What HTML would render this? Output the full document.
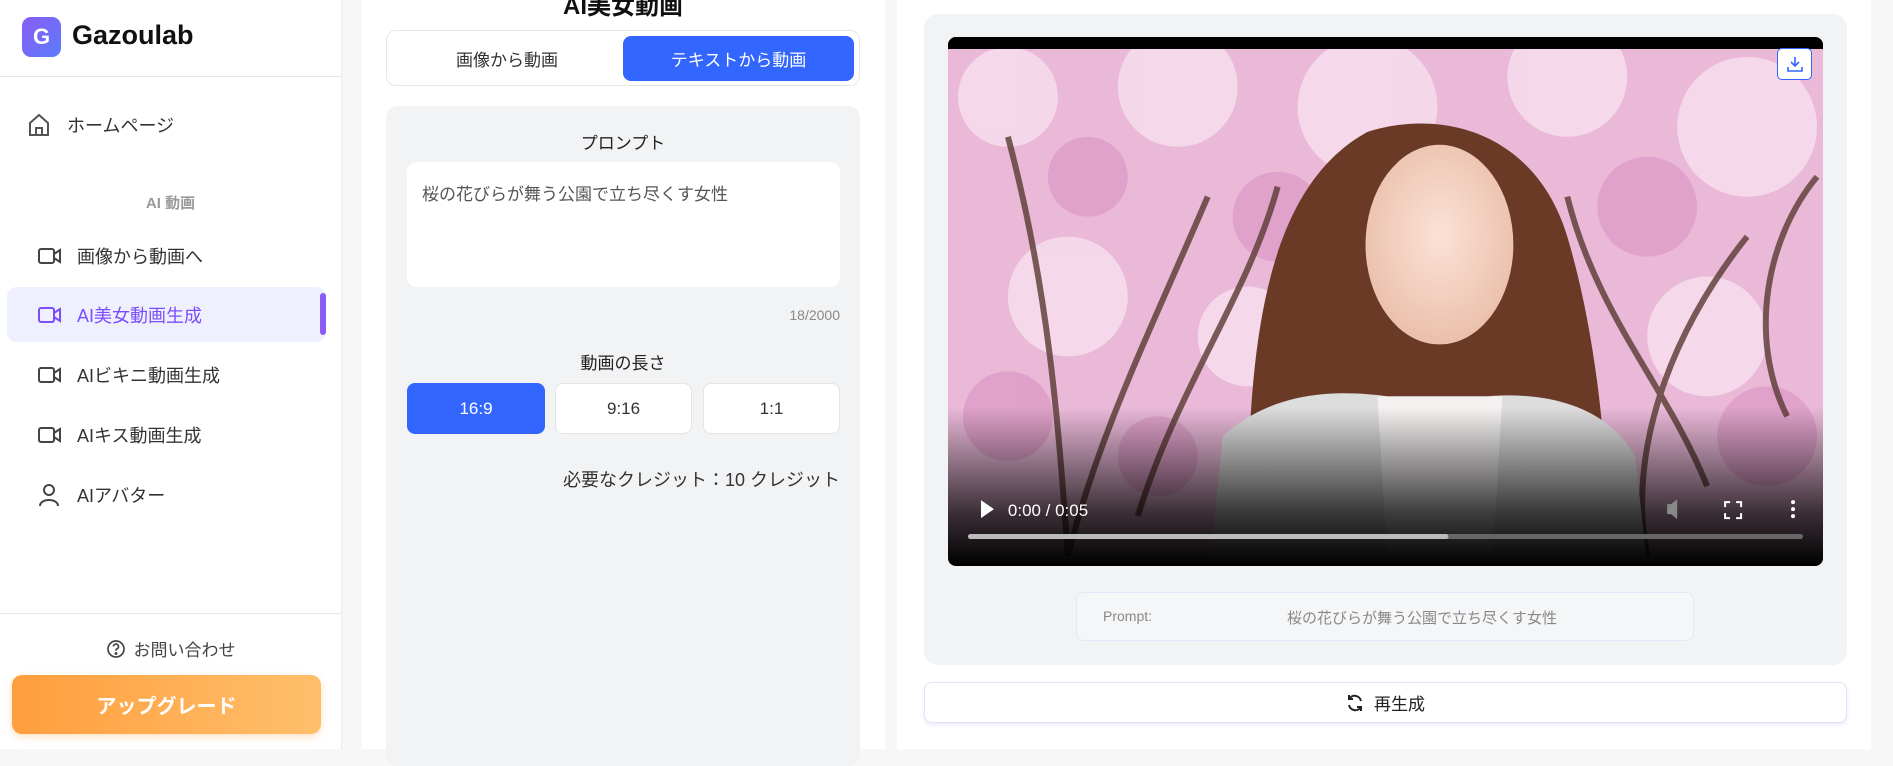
<!DOCTYPE html>
<html><head><meta charset="utf-8"><style>
*{box-sizing:border-box;margin:0;padding:0}
body{width:1893px;height:749px;overflow:hidden;background:#f7f7f8;font-family:"Liberation Sans","Noto Sans CJK JP",sans-serif;color:#333;position:relative}
.abs{position:absolute}
.side{left:0;top:0;width:342px;height:749px;background:#fff;border-right:1px solid #ececec}
.item{position:absolute;left:7px;width:319px;height:55px;display:flex;align-items:center;font-size:18px;color:#333}
.item svg{position:absolute;left:31px}
.item span{position:absolute;left:70px}
.c{display:flex;align-items:center;justify-content:center}
</style></head><body>
<div class="abs side">
  <div class="abs c" style="left:22px;top:17px;width:39px;height:40px;border-radius:9px;background:linear-gradient(135deg,#8a5cf6,#5b7cfa);color:#fff;font-weight:bold;font-size:22px">G</div>
  <div class="abs" style="left:72px;top:20px;font-size:27px;font-weight:bold;color:#111">Gazoulab</div>
  <div class="abs" style="left:0;top:76px;width:341px;height:1px;background:#e8e8e8"></div>
  <div class="item" style="top:97px"><svg style="left:21px" width="22" height="24" viewBox="0 0 22 24" fill="none" stroke="#555" stroke-width="2"><path d="M2 10 L11 2 L20 10 V22 H2 Z"/><path d="M8 22 V15 H14 V22"/></svg><span style="left:60px">ホームページ</span></div>
  <div class="abs" style="left:0;width:341px;top:192px;text-align:center;font-size:15px;color:#999;font-weight:bold">AI 動画</div>
  <div class="item" style="top:228px"><svg width="24" height="18" viewBox="0 0 24 18" fill="none" stroke="#444" stroke-width="2"><rect x="1" y="2" width="15" height="14" rx="2"/><path d="M16 7 L22 3 V15 L16 11"/></svg><span>画像から動画へ</span></div>
  <div class="item" style="top:287px;background:#eef0fe;border-radius:10px"><svg width="24" height="18" viewBox="0 0 24 18" fill="none" stroke="#7c4dff" stroke-width="2"><rect x="1" y="2" width="15" height="14" rx="2"/><path d="M16 7 L22 3 V15 L16 11"/></svg><span style="color:#7c4dff">AI美女動画生成</span><div class="abs" style="left:313px;top:6px;width:6px;height:42px;background:#8b5cf6;border-radius:3px"></div></div>
  <div class="item" style="top:347px"><svg width="24" height="18" viewBox="0 0 24 18" fill="none" stroke="#444" stroke-width="2"><rect x="1" y="2" width="15" height="14" rx="2"/><path d="M16 7 L22 3 V15 L16 11"/></svg><span>AIビキニ動画生成</span></div>
  <div class="item" style="top:407px"><svg width="24" height="18" viewBox="0 0 24 18" fill="none" stroke="#444" stroke-width="2"><rect x="1" y="2" width="15" height="14" rx="2"/><path d="M16 7 L22 3 V15 L16 11"/></svg><span>AIキス動画生成</span></div>
  <div class="item" style="top:467px"><svg width="22" height="24" viewBox="0 0 22 24" fill="none" stroke="#444" stroke-width="2"><circle cx="11" cy="7" r="5"/><path d="M2 23 C2 15 20 15 20 23"/></svg><span>AIアバター</span></div>
  <div class="abs" style="left:0;top:613px;width:341px;height:1px;background:#e8e8e8"></div>
  <div class="abs c" style="left:0;width:341px;top:636px;font-size:17px;color:#444;gap:8px"><svg width="20" height="20" viewBox="0 0 20 20" fill="none" stroke="#444" stroke-width="1.7"><circle cx="10" cy="10" r="8"/><path d="M7.5 7.5 a2.5 2.5 0 1 1 3.5 2.3 c-1 .5-1 1-1 2"/><circle cx="10" cy="14.5" r=".6" fill="#444"/></svg>お問い合わせ</div>
  <div class="abs c" style="left:12px;top:675px;width:309px;height:59px;border-radius:10px;background:linear-gradient(90deg,#ff9e3d,#ffbf6b);color:#fff;font-weight:bold;font-size:20px;box-shadow:0 3px 8px rgba(255,160,60,.3)">アップグレード</div>
</div>

<div class="abs" style="left:362px;top:0;width:523px;height:749px;background:#fff"></div>
<div class="abs" style="left:386px;top:-14px;width:474px;text-align:center;font-size:24px;font-weight:bold;color:#111">AI美女動画</div>
<div class="abs" style="left:386px;top:30px;width:474px;height:56px;border:1px solid #e6e6e6;border-radius:10px"></div>
<div class="abs c" style="left:392px;top:36px;width:230px;height:45px;font-size:17px;color:#333">画像から動画</div>
<div class="abs c" style="left:623px;top:36px;width:231px;height:45px;background:#3366ff;border-radius:8px;font-size:17px;color:#fff">テキストから動画</div>
<div class="abs" style="left:386px;top:106px;width:474px;height:660px;background:#f2f3f5;border-radius:12px"></div>
<div class="abs" style="left:386px;width:474px;top:129px;text-align:center;font-size:17px;color:#222">プロンプト</div>
<div class="abs" style="left:407px;top:162px;width:433px;height:125px;background:#fff;border-radius:10px;padding:18px 15px;font-size:17px;color:#555">桜の花びらが舞う公園で立ち尽くす女性</div>
<div class="abs" style="left:700px;width:140px;top:307px;text-align:right;font-size:14px;color:#888">18/2000</div>
<div class="abs" style="left:386px;width:474px;top:349px;text-align:center;font-size:17px;color:#222">動画の長さ</div>
<div class="abs c" style="left:407px;top:383px;width:138px;height:51px;background:#3366ff;border-radius:8px;color:#fff;font-size:17px">16:9</div>
<div class="abs c" style="left:555px;top:383px;width:137px;height:51px;background:#fff;border:1px solid #e4e4e4;border-radius:8px;font-size:17px">9:16</div>
<div class="abs c" style="left:703px;top:383px;width:137px;height:51px;background:#fff;border:1px solid #e4e4e4;border-radius:8px;font-size:17px">1:1</div>
<div class="abs" style="left:500px;width:340px;top:466px;text-align:right;font-size:18px;color:#333">必要なクレジット：10 クレジット</div>

<div class="abs" style="left:897px;top:0;width:974px;height:749px;background:#fff"></div>
<div class="abs" style="left:924px;top:14px;width:923px;height:651px;background:#f2f3f5;border-radius:14px"></div>
<div class="abs" style="left:948px;top:37px;width:875px;height:529px;border-radius:8px;overflow:hidden;background:#000">
<svg width="875" height="529" viewBox="0 0 876 530" preserveAspectRatio="none">
<defs>
<linearGradient id="bot" x1="0" y1="0" x2="0" y2="1"><stop offset="0.7" stop-color="#000" stop-opacity="0"/><stop offset="0.9" stop-color="#000" stop-opacity="0.75"/><stop offset="1" stop-color="#000" stop-opacity="1"/></linearGradient>
<radialGradient id="face" cx=".5" cy=".45" r=".6"><stop offset="0" stop-color="#fbe2d6"/><stop offset="1" stop-color="#e9bda8"/></radialGradient>
</defs>
<rect x="0" y="12" width="876" height="518" fill="#eab9d8"/>
<g fill="#f6dcec" opacity=".9"><circle cx="60" cy="60" r="50"/><circle cx="230" cy="50" r="60"/><circle cx="420" cy="70" r="70"/><circle cx="620" cy="40" r="60"/><circle cx="800" cy="90" r="70"/><circle cx="120" cy="260" r="60"/><circle cx="760" cy="300" r="60"/><circle cx="300" cy="300" r="50"/></g>
<g fill="#dc98c4" opacity=".7"><circle cx="140" cy="140" r="40"/><circle cx="330" cy="180" r="45"/><circle cx="700" cy="170" r="50"/><circle cx="60" cy="380" r="45"/><circle cx="820" cy="400" r="50"/><circle cx="210" cy="420" r="40"/></g>
<g stroke="#5a3a33" stroke-width="6" fill="none" opacity=".8"><path d="M120 520 C110 380 100 250 60 100"/><path d="M120 520 C150 400 200 300 260 160"/><path d="M190 480 C230 350 300 260 330 150"/><path d="M700 520 C680 420 720 300 800 200"/><path d="M760 450 C720 350 650 280 620 160"/><path d="M840 380 C800 300 820 200 870 140"/></g>
<path d="M300 490 C300 300 320 150 420 95 C500 70 590 100 620 200 C650 300 660 420 660 490 Z" fill="#6b3a26"/>
<ellipse cx="492" cy="208" rx="74" ry="100" fill="url(#face)"/>
<path d="M262 530 L275 400 C330 350 400 355 440 360 L540 360 C600 355 660 370 688 420 L700 530 Z" fill="#ddd"/>
<path d="M430 360 L555 360 L545 530 L440 530 Z" fill="#f4f1f0"/>
<rect x="0" y="0" width="876" height="530" fill="url(#bot)"/>
<rect x="0" y="0" width="876" height="12" fill="#000"/>
<path d="M33 464 L33 482 L46 473 Z" fill="#fff"/>
<text x="60" y="480" font-family="Liberation Sans,sans-serif" font-size="17" fill="#fff">0:00 / 0:05</text>
<path d="M720 468 h4 l6 -5 v20 l-6 -5 h-4 Z" fill="#888"/>
<g stroke="#fff" stroke-width="2" fill="none"><path d="M778 471 v-5 h5 M789 466 h5 v5 M794 477 v5 h-5 M783 482 h-5 v-5"/></g>
<g fill="#fff"><circle cx="846" cy="466" r="2"/><circle cx="846" cy="473" r="2"/><circle cx="846" cy="480" r="2"/></g>
<rect x="20" y="498" width="836" height="5" rx="2.5" fill="#666"/>
<rect x="20" y="498" width="481" height="5" rx="2.5" fill="#bbb"/>
</svg>
<div class="abs c" style="left:829px;top:11px;width:35px;height:32px;background:#fff;border:1px solid #3366ff;border-radius:5px"><svg width="18" height="18" viewBox="0 0 18 18" fill="none" stroke="#3366ff" stroke-width="1.6"><path d="M9 2 v9 M5 7 l4 4 4-4 M2 12 v4 h14 v-4"/></svg></div>
</div>
<div class="abs" style="left:1076px;top:592px;width:618px;height:49px;background:#f5f6f8;border:1px solid #e2e8f8;border-radius:8px;font-size:14px;color:#888">
<span class="abs" style="left:26px;top:15px">Prompt:</span><span class="abs" style="left:210px;width:270px;top:14px;text-align:center;font-size:15px">桜の花びらが舞う公園で立ち尽くす女性</span></div>
<div class="abs c" style="left:924px;top:682px;width:923px;height:41px;background:#fff;border:1px solid #dfe4fb;border-radius:8px;box-shadow:0 2px 4px rgba(120,130,200,.15);font-size:17px;color:#222;gap:10px"><svg width="18" height="20" viewBox="0 0 18 20" fill="none" stroke="#222" stroke-width="2"><path d="M15 8 A6.5 6.5 0 0 0 3 6 M3 2 v4 h4"/><path d="M3 12 A6.5 6.5 0 0 0 15 14 M15 18 v-4 h-4"/></svg>再生成</div>
</body></html>
